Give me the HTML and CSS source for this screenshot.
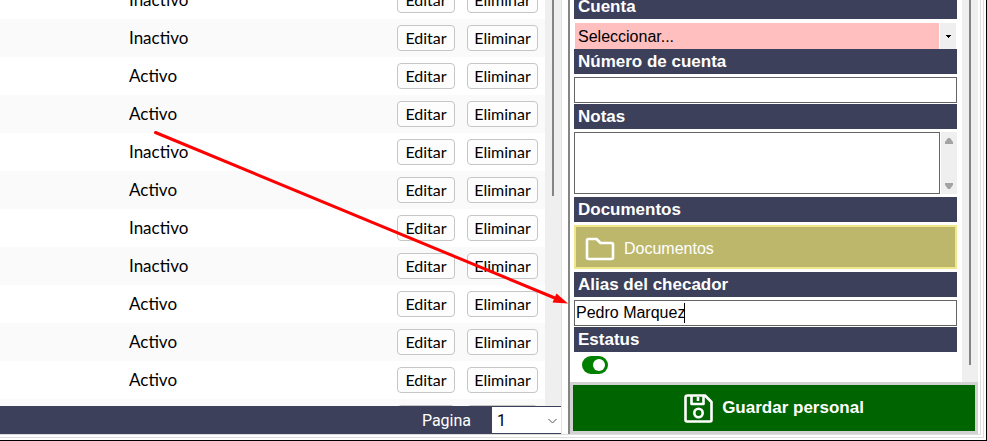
FILE: index.html
```html
<!DOCTYPE html>
<html lang="es">
<head>
<meta charset="utf-8">
<title>Personal</title>
<link rel="stylesheet" href="styles.css">
</head>
<body>
<div class="window">
  <main class="list">
    <div class="list-body">
      <div class="table-clip">
        <table class="people">
          <tbody>
            <tr><td class="state">Inactivo</td><td class="actions"><button type="button">Editar</button><button type="button">Eliminar</button></td></tr>
            <tr><td class="state">Inactivo</td><td class="actions"><button type="button">Editar</button><button type="button">Eliminar</button></td></tr>
            <tr><td class="state">Activo</td><td class="actions"><button type="button">Editar</button><button type="button">Eliminar</button></td></tr>
            <tr><td class="state">Activo</td><td class="actions"><button type="button">Editar</button><button type="button">Eliminar</button></td></tr>
            <tr><td class="state">Inactivo</td><td class="actions"><button type="button">Editar</button><button type="button">Eliminar</button></td></tr>
            <tr><td class="state">Activo</td><td class="actions"><button type="button">Editar</button><button type="button">Eliminar</button></td></tr>
            <tr><td class="state">Inactivo</td><td class="actions"><button type="button">Editar</button><button type="button">Eliminar</button></td></tr>
            <tr><td class="state">Inactivo</td><td class="actions"><button type="button">Editar</button><button type="button">Eliminar</button></td></tr>
            <tr><td class="state">Activo</td><td class="actions"><button type="button">Editar</button><button type="button">Eliminar</button></td></tr>
            <tr><td class="state">Activo</td><td class="actions"><button type="button">Editar</button><button type="button">Eliminar</button></td></tr>
            <tr><td class="state">Activo</td><td class="actions"><button type="button">Editar</button><button type="button">Eliminar</button></td></tr>
            <tr><td class="state"></td><td class="actions"><button type="button"></button><button type="button"></button></td></tr>
          </tbody>
        </table>
      </div>
      <div class="track"><div class="thumb thumb-list"></div></div>
    </div>
    <div class="pager">
      <label for="page">Pagina</label>
      <div class="pick pick-page">
        <select id="page"><option>1</option></select>
        <svg width="16" height="26" viewBox="0 0 16 26"><path d="M3.500 12l4 4 4-4" fill="none" stroke="#555"/></svg>
      </div>
    </div>
  </main>
  <aside class="editor">
    <div class="editor-body">
      <form class="fields">
        <label class="title" for="account">Cuenta</label>
        <div class="pick pick-account">
          <select id="account"><option>Seleccionar...</option></select>
          <svg width="17" height="26" viewBox="0 0 17 26"><path d="M0 0h1v26H0z" fill="#fff"/><path d="M1 0h16v26H1z" fill="#efefef"/><path d="M7 12h5v1h-1v1h-1v1H9v-1H8v-1H7z" fill="#000"/></svg>
        </div>
        <label class="title" for="number">Número de cuenta</label>
        <input class="box" id="number" type="text">
        <label class="title" for="notes">Notas</label>
        <div class="notes">
          <textarea class="box" id="notes"></textarea>
          <div class="notes-scroll">
            <svg width="8" height="6" viewBox="0 0 8 6"><path d="M3 0h2l3 4v2H0V4z" fill="#a3a3a3"/></svg>
            <svg width="8" height="6" viewBox="0 0 8 6"><path d="M3 6h2l3-4V0H0v2z" fill="#a3a3a3"/></svg>
          </div>
        </div>
        <label class="title" for="docs">Documentos</label>
        <button class="docs" id="docs" type="button">
          <svg width="30" height="24" viewBox="0 0 30 24"><path d="M3.500 2h8l4 4h11q1.500 0 1.500 1.500v13q0 1.500-1.500 1.500h-23Q2 22 2 20.500v-17Q2 2 3.500 2z" fill="none" stroke="#fff" stroke-width="2.600" stroke-linejoin="round"/></svg>
          Documentos
        </button>
        <label class="title" for="alias">Alias del checador</label>
        <div class="alias">
          <input class="box" id="alias" type="text" value="Pedro Marquez">
          <span class="caret"></span>
        </div>
        <label class="title" for="status">Estatus</label>
        <input class="switch" id="status" type="checkbox" role="switch" checked>
      </form>
      <div class="track"><div class="thumb thumb-editor"></div></div>
    </div>
    <button class="save" type="button">
      <svg width="29" height="29" viewBox="0 0 29 29" fill="none" stroke="#fff" stroke-width="2.600" stroke-linejoin="round"><path d="M3.500 1.500h17.500l6.500 6.500v18q0 1.500-1.500 1.500H3q-1.500 0-1.500-1.500V3.500q0-2 2-2z"/><path d="M7.500 2v8h12V2M14 3v4"/><circle cx="14.500" cy="19" r="4.200"/></svg>
      Guardar personal
    </button>
  </aside>
</div>
<svg class="arrow" width="987" height="441" viewBox="0 0 987 441"><path d="M155.500 132.500L556 298.500" stroke="red" stroke-width="3" stroke-linecap="round"/><path d="M568 303.500L552.500 302.500 556.500 293.500z" fill="red"/></svg>
</body>
</html>
```
FILE: styles.css
```css
* {
  box-sizing: border-box;
}

body {
  margin: 0;
  background: #fff;
  color: #000;
  font: 16px "Liberation Sans", Arial, sans-serif;
}

button, input, select, textarea {
  margin: 0;
  border-radius: 0;
  color: inherit;
  font: inherit;
}

.window {
  display: flex;
  gap: 6px;
  height: 100vh;
  padding: 0 8px 6px 0;
  overflow: hidden;
  border-right: 1px solid #000;
  border-bottom: 1px solid #000;
  box-shadow: inset -2px -2px #fff, inset -3px -3px #ddd, inset -5px -5px #fff, inset -6px -6px #ddd;
}

.list {
  display: flex;
  flex: 1;
  flex-direction: column;
  min-width: 0;
  border-right: 1px solid #e3e3e3;
}

.list-body, .editor-body {
  display: flex;
  flex: 1;
  min-height: 0;
}

.table-clip {
  flex: 1;
  overflow: hidden;
}

.people {
  width: 100%;
  margin-top: -19px;
  border-collapse: collapse;
  font-family: "Century Gothic", Lato, sans-serif;
}

.people tr {
  height: 38px;
}

.people tr:nth-child(even) {
  background: #fafafa;
}

.people td {
  padding: 0 7px 0 0;
}

.people .state {
  padding: 0 0 2px 129px;
  font-size: 17px;
}

.actions {
  display: flex;
  align-items: center;
  justify-content: flex-end;
  gap: 12px;
  height: 38px;
}

.actions button {
  width: 58px;
  height: 26px;
  padding: 0 0 2px;
  border: 1px solid #c6c6c6;
  border-radius: 4px;
  background: #fdfdfd;
}

.actions button + button {
  width: 71px;
}

.track {
  flex: none;
  width: 16px;
  background: #efefef;
}

.thumb {
  width: 2px;
  margin-left: 7px;
  background: #858585;
}

.thumb-list {
  height: 196px;
}

.thumb-editor {
  height: 365px;
}

.pager {
  display: flex;
  align-items: center;
  justify-content: flex-end;
  gap: 21px;
  height: 28px;
  background: #3c405a;
  color: #fff;
  font-family: Roboto, sans-serif;
}

.pick {
  display: grid;
  align-items: center;
}

.pick > * {
  grid-area: 1 / 1;
}

.pick select {
  width: 100%;
  height: 26px;
  border: 0;
  appearance: none;
}

.pick svg {
  justify-self: end;
  pointer-events: none;
}

.pick-page {
  width: 69px;
}

.pick-page select {
  padding: 0 5px;
  background: #fff;
  color: #000;
}

.pick-account {
  margin: 4px 1px 0;
}

.pick-account select {
  padding: 0 3px;
  background: #ffbfbf;
}

.editor {
  display: flex;
  flex: none;
  flex-direction: column;
  width: 410px;
  border-left: 2px solid #858585;
}

.fields {
  display: flex;
  flex: 1;
  flex-direction: column;
  margin-top: -6px;
  padding: 0 5px 0 4px;
}

.title {
  flex: none;
  height: 25px;
  padding: 0 4px;
  background: #3c405a;
  color: #fff;
  font-size: 17px;
  font-weight: bold;
  line-height: 25px;
}

.box {
  display: block;
  width: 100%;
  height: 26px;
  padding: 0 1px;
  border: 1px solid #646464;
  background: #fff;
  outline: 0;
}

.fields > .box, .alias {
  margin: 3px 0 1px;
}

.notes {
  display: flex;
  gap: 1px;
  margin: 3px 0;
}

.notes .box {
  flex: 1;
  height: 62px;
  resize: none;
}

.notes-scroll {
  display: flex;
  flex-direction: column;
  align-items: center;
  justify-content: space-between;
  width: 16px;
  padding: 6px 0 5px;
  background: #efefef;
}

.docs {
  display: flex;
  align-items: center;
  gap: 9px;
  height: 44px;
  margin: 3px 0;
  padding: 4px 9px 0;
  border: 2px solid #f0e68c;
  background: #bdb76b;
  color: #fff;
}

.alias {
  position: relative;
}

.caret {
  position: absolute;
  top: 3px;
  left: 110px;
  width: 1px;
  height: 20px;
  background: #000;
}

.switch {
  display: flex;
  align-items: center;
  justify-content: flex-end;
  width: 26px;
  height: 18px;
  margin: 4px 8px;
  padding: 3px;
  border-radius: 9px;
  background: #008000;
  appearance: none;
}

.switch::before {
  width: 12px;
  height: 12px;
  border-radius: 50%;
  background: #fff;
  content: "";
}

.save {
  display: flex;
  align-items: center;
  justify-content: center;
  gap: 9px;
  height: 52px;
  padding: 0;
  border: 3px solid #d2d2d2;
  background: #006400;
  color: #fff;
  font-size: 17px;
  font-weight: bold;
}

.arrow {
  position: absolute;
  top: 0;
  left: 0;
  pointer-events: none;
}
```
